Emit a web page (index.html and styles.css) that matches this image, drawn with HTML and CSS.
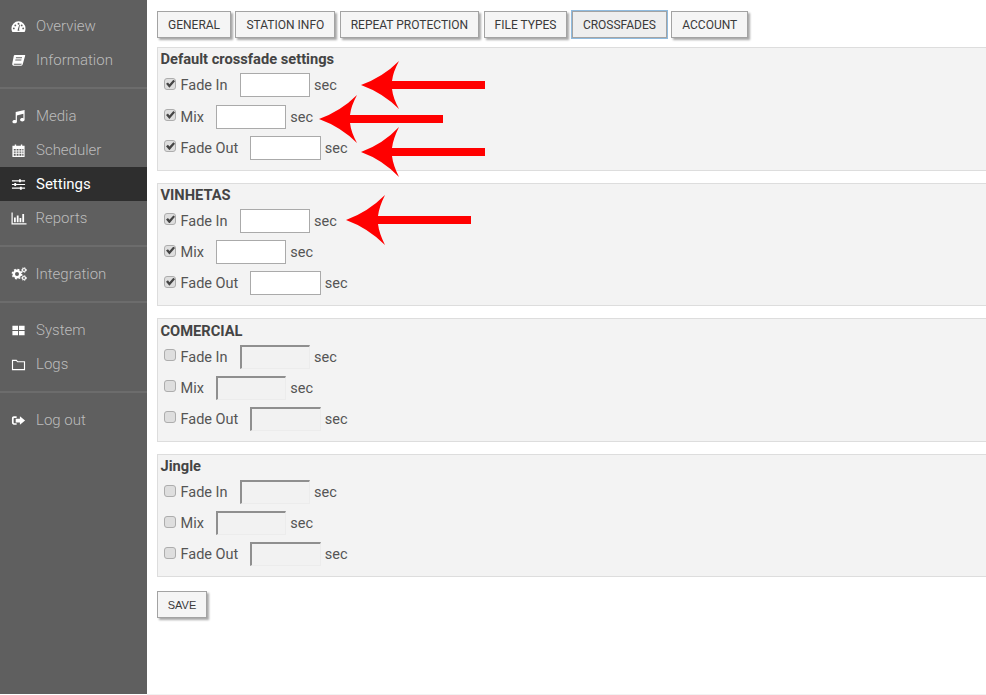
FILE: index.html
```html
<!DOCTYPE html>
<html lang="en">
<head>
<meta charset="utf-8">
<title>Settings</title>
<link rel="stylesheet" href="styles.css">
</head>
<body>
<div class="app">
  <nav class="sidebar">
    <ul class="group first">
      <li class="item"><svg class="ico" viewBox="0 0 16 16"><path d="M8 2.500a7.500 7.500 0 0 0-7.500 7.500c0 1.400.4 2.700 1 3.800h13c.6-1.100 1-2.400 1-3.800A7.500 7.500 0 0 0 8 2.500zM3 11a1 1 0 1 1 0-2 1 1 0 0 1 0 2zm1.600-3.200a1 1 0 1 1 0-2 1 1 0 0 1 0 2zM8 6a1 1 0 1 1 0-2 1 1 0 0 1 0 2zm1 6.500H7l.4-2 1.500-4.500.7.200-1 4.600zm2.400-4.700a1 1 0 1 1 0-2 1 1 0 0 1 0 2zM13 11a1 1 0 1 1 0-2 1 1 0 0 1 0 2z" fill-rule="evenodd"/></svg>Overview</li>
      <li class="item"><svg class="ico" viewBox="0 0 16 16"><path d="M4 2h10.500c.6 0 .8.500.6 1L12.500 12c-.2.800-.8 1.500-1.700 1.500H2.800c-1 0-1.700-.9-1.500-2L3 3c.1-.6.500-1 1-1zm1.300 2.500-.2 1h6.500l.2-1zm-.6 2.500-.2 1h6.500l.2-1zM3 11.500c-.2.600.1 1 .6 1h7c.4 0 .7-.3.9-.8l.1-.2z" fill-rule="evenodd"/></svg>Information</li>
    </ul>
    <ul class="group">
      <li class="item"><svg class="ico" viewBox="0 0 16 16"><path d="M14.500 1v10.500c0 1.100-1.300 1.800-2.500 1.800s-2.300-.7-2.300-1.800 1.200-1.800 2.300-1.800c.5 0 .9.100 1.200.3V5L6.300 6.900v6.600c0 1.100-1.300 1.800-2.500 1.800S1.500 14.600 1.500 13.500s1.200-1.800 2.300-1.800c.5 0 .9.100 1.200.3V3.200z"/></svg>Media</li>
      <li class="item"><svg class="ico" viewBox="0 0 16 16"><path d="M1.500 3H4V1.500h1.500V3h5V1.500H12V3h2.500v12h-13zM3 6.500V8h2V6.500zm3 0V8h2V6.500zm3 0V8h2V6.500zm3 0V8h1.300V6.500zM3 9v1.500h2V9zm3 0v1.500h2V9zm3 0v1.500h2V9zm3 0v1.500h1.300V9zM3 11.500V13.500h2v-2zm3 0v2h2v-2zm3 0v2h2v-2zm3 0v2h1.300v-2z" fill-rule="evenodd"/></svg>Scheduler</li>
      <li class="item active"><svg class="ico" viewBox="0 0 16 16"><path d="M1 3.500h7.500V2.500h2v1H15v1.200h-4.500v1h-2v-1H1zM1 7.400h2.500v-1h2v1H15v1.200H5.500v1h-2v-1H1zM1 11.300h8.500v-1h2v1H15v1.200h-3.500v1h-2v-1H1z"/></svg>Settings</li>
      <li class="item"><svg class="ico wide" viewBox="0 0 16 16"><path d="M.5 2.500h1.200v10.800h13.800v1.200H.5zM3 7.500h1.800v4.800H3zM5.800 5.500h1.800v6.800H5.800zM8.500 8h1.800v4.300H8.500zM11.300 4h1.800v8.300h-1.800z"/></svg>Reports</li>
    </ul>
    <ul class="group">
      <li class="item"><svg class="ico wide" viewBox="0 0 16 16"><circle class="gear-body" cx="6" cy="8" r="3.200"/><circle class="gear-teeth" cx="6" cy="8" r="4.700"/><circle class="gear-small" cx="13" cy="4" r="1.500"/><circle class="gear-small-teeth" cx="13" cy="4" r="2.400"/><circle class="gear-small" cx="13" cy="12" r="1.500"/><circle class="gear-small-teeth" cx="13" cy="12" r="2.400"/></svg>Integration</li>
    </ul>
    <ul class="group">
      <li class="item"><svg class="ico" viewBox="0 0 16 16"><path d="M1.500 3h6v4.500h-6zM8.500 3h6v4.500h-6zM1.500 8.500h6V13h-6zM8.500 8.500h6V13h-6z"/></svg>System</li>
      <li class="item"><svg class="ico" viewBox="0 0 16 16"><path d="M1 3h5l1.300 1.500H15V14H1zm1.200 1.200v8.600h11.600V5.700H6.800L5.500 4.200z" fill-rule="evenodd"/></svg>Logs</li>
    </ul>
    <ul class="group">
      <li class="item"><svg class="ico" viewBox="0 0 16 16"><path d="M6 3.500v1.700H3.500c-.4 0-.7.300-.7.700v4.200c0 .4.300.7.700.7H6v1.700H3C2 12.500 1 11.700 1 10.500v-5C1 4.300 2 3.500 3 3.500zM9.500 3.500 15 8l-5.500 4.500V10H5V6h4.500z"/></svg>Log out</li>
    </ul>
  </nav>
  <main class="content">
    <div class="tabs">
      <button class="btn">General</button>
      <button class="btn">Station info</button>
      <button class="btn">Repeat protection</button>
      <button class="btn">File types</button>
      <button class="btn current">Crossfades</button>
      <button class="btn">Account</button>
    </div>
    <section class="panel">
      <h3 class="title">Default crossfade settings</h3>
      <label class="row"><input type="checkbox" class="chk" checked><span class="lbl">Fade In</span><input type="text" class="num"><span class="sec">sec</span></label>
      <label class="row"><input type="checkbox" class="chk" checked><span class="lbl">Mix</span><input type="text" class="num"><span class="sec">sec</span></label>
      <label class="row"><input type="checkbox" class="chk" checked><span class="lbl">Fade Out</span><input type="text" class="num"><span class="sec">sec</span></label>
    </section>
    <section class="panel">
      <h3 class="title">VINHETAS</h3>
      <label class="row"><input type="checkbox" class="chk" checked><span class="lbl">Fade In</span><input type="text" class="num"><span class="sec">sec</span></label>
      <label class="row"><input type="checkbox" class="chk" checked><span class="lbl">Mix</span><input type="text" class="num"><span class="sec">sec</span></label>
      <label class="row"><input type="checkbox" class="chk" checked><span class="lbl">Fade Out</span><input type="text" class="num"><span class="sec">sec</span></label>
    </section>
    <section class="panel">
      <h3 class="title">COMERCIAL</h3>
      <label class="row"><input type="checkbox" class="chk"><span class="lbl">Fade In</span><input type="text" class="num" disabled><span class="sec">sec</span></label>
      <label class="row"><input type="checkbox" class="chk"><span class="lbl">Mix</span><input type="text" class="num" disabled><span class="sec">sec</span></label>
      <label class="row"><input type="checkbox" class="chk"><span class="lbl">Fade Out</span><input type="text" class="num" disabled><span class="sec">sec</span></label>
    </section>
    <section class="panel">
      <h3 class="title">Jingle</h3>
      <label class="row"><input type="checkbox" class="chk"><span class="lbl">Fade In</span><input type="text" class="num" disabled><span class="sec">sec</span></label>
      <label class="row"><input type="checkbox" class="chk"><span class="lbl">Mix</span><input type="text" class="num" disabled><span class="sec">sec</span></label>
      <label class="row"><input type="checkbox" class="chk"><span class="lbl">Fade Out</span><input type="text" class="num" disabled><span class="sec">sec</span></label>
    </section>
    <button class="btn save">Save</button>
  </main>
  <svg class="arrows" viewBox="0 0 986 695" aria-hidden="true">
    <path class="arrow" d="M361 85Q383 77 399 61Q393 72 392 81H485V89H392Q393 98 399 109Q383 93 361 85Z"/>
    <path class="arrow" d="M319 119Q341 111 357 95Q351 106 350 115H443V123H350Q351 132 357 143Q341 127 319 119Z"/>
    <path class="arrow" d="M361 152Q383 144 399 127Q393 139 392 148H485V156H392Q393 165 399 177Q383 160 361 152Z"/>
    <path class="arrow" d="M346 220Q368 212 385 195Q379 207 378 216H471V224H378Q379 233 385 245Q368 228 346 220Z"/>
  </svg>
</div>
</body>
</html>
```

FILE: styles.css
```css
* { box-sizing: border-box; }
html, body { margin: 0; height: 100%; overflow: hidden; background: #fff; }
body { font-family: Roboto, "Liberation Sans", sans-serif; color: #444; }

.app { position: relative; display: flex; align-items: flex-start; width: 986px; height: 695px; overflow: hidden; }

.sidebar { flex: 0 0 147px; height: 694px; background: #5f5f5f; padding-top: 9px; }
.group { list-style: none; margin: 0 0 10px; padding: 0 0 10px; border-bottom: 2px solid #6c6c6c; }
.group:last-child { border-bottom: 0; }
.item { display: flex; align-items: center; height: 34px; padding-left: 11px; font-size: 15px; font-weight: 300; color: #bcbcbc; }
.item.active { background: #2e2e2e; color: #fff; font-weight: 400; }
.ico { width: 15px; height: 15px; margin-right: 10px; fill: #fff; flex: none; }
.ico.wide { width: 16px; height: 16px; margin-right: 9px; margin-left: -.5px; }
.gear-body { fill: none; stroke: #fff; stroke-width: 2.400; }
.gear-teeth { fill: none; stroke: #fff; stroke-width: 1.400; stroke-dasharray: 1.900 1.790; }
.gear-small { fill: none; stroke: #fff; stroke-width: 1.200; }
.gear-small-teeth { fill: none; stroke: #fff; stroke-width: .9; stroke-dasharray: 1.100 1.000; }

.content { flex: 1; min-width: 0; height: 695px; padding: 11px 0 0 10px; border-bottom: 1px solid #f2f2f2; }
.tabs { display: flex; gap: 4.400px; margin-bottom: 9px; }
.btn { height: 27px; padding: 0 10px; background: #f5f5f5; border: 1px solid #a3a3a3; box-shadow: 2px 2px 2px #a9a9a9; border-radius: 0; font: 400 12px Roboto, sans-serif; color: #3a3a3a; text-transform: uppercase; }
.btn.current { background: #eee; box-shadow: none; outline: 1px solid #8fbbdf; outline-offset: 0; }

.panel { width: 840px; height: 123.600px; margin-bottom: 12px; padding: 1px 3px 0 2.500px; background: #f3f3f3; border: 1px solid #ddd; }
.title { margin: 0; padding-top: .4px; font: 700 14.670px/20.350px Roboto, sans-serif; color: #444; }
.row { display: flex; align-items: center; height: 31.200px; padding-left: 3.500px; font-size: 14.500px; color: #555; }
.chk { appearance: none; position: relative; width: 12px; height: 12px; margin: 0 4.500px 3px 0; flex: none; background: #dedede; border: 1px solid #adadad; border-radius: 3px; }
.chk:checked::after { content: ""; position: absolute; left: 1px; top: 1px; width: 9px; height: 8px; background: #444; clip-path: polygon(0 50%, 22% 32%, 38% 55%, 82% 0, 100% 18%, 38% 100%); }
.lbl { margin-right: 12px; padding-top: 1px; }
.num { width: 70.400px; height: 24px; margin-right: 4px; padding: 0; background: #fff; border: 1px solid #aaa; }
.num:disabled { background: #f2f2f2; border-style: solid; border-width: 2px 1px 1px 2px; border-color: #8f8f8f #ececec #ececec #8f8f8f; }
.sec { padding-top: 1px; color: #555; }

.save { display: block; height: 27px; width: 50px; padding: 0; margin-top: 14px; font-family: "Liberation Sans", sans-serif; font-size: 11px; }

.arrows { position: absolute; left: 0; top: 0; width: 986px; height: 695px; pointer-events: none; }
.arrow { fill: #f00; }
```
